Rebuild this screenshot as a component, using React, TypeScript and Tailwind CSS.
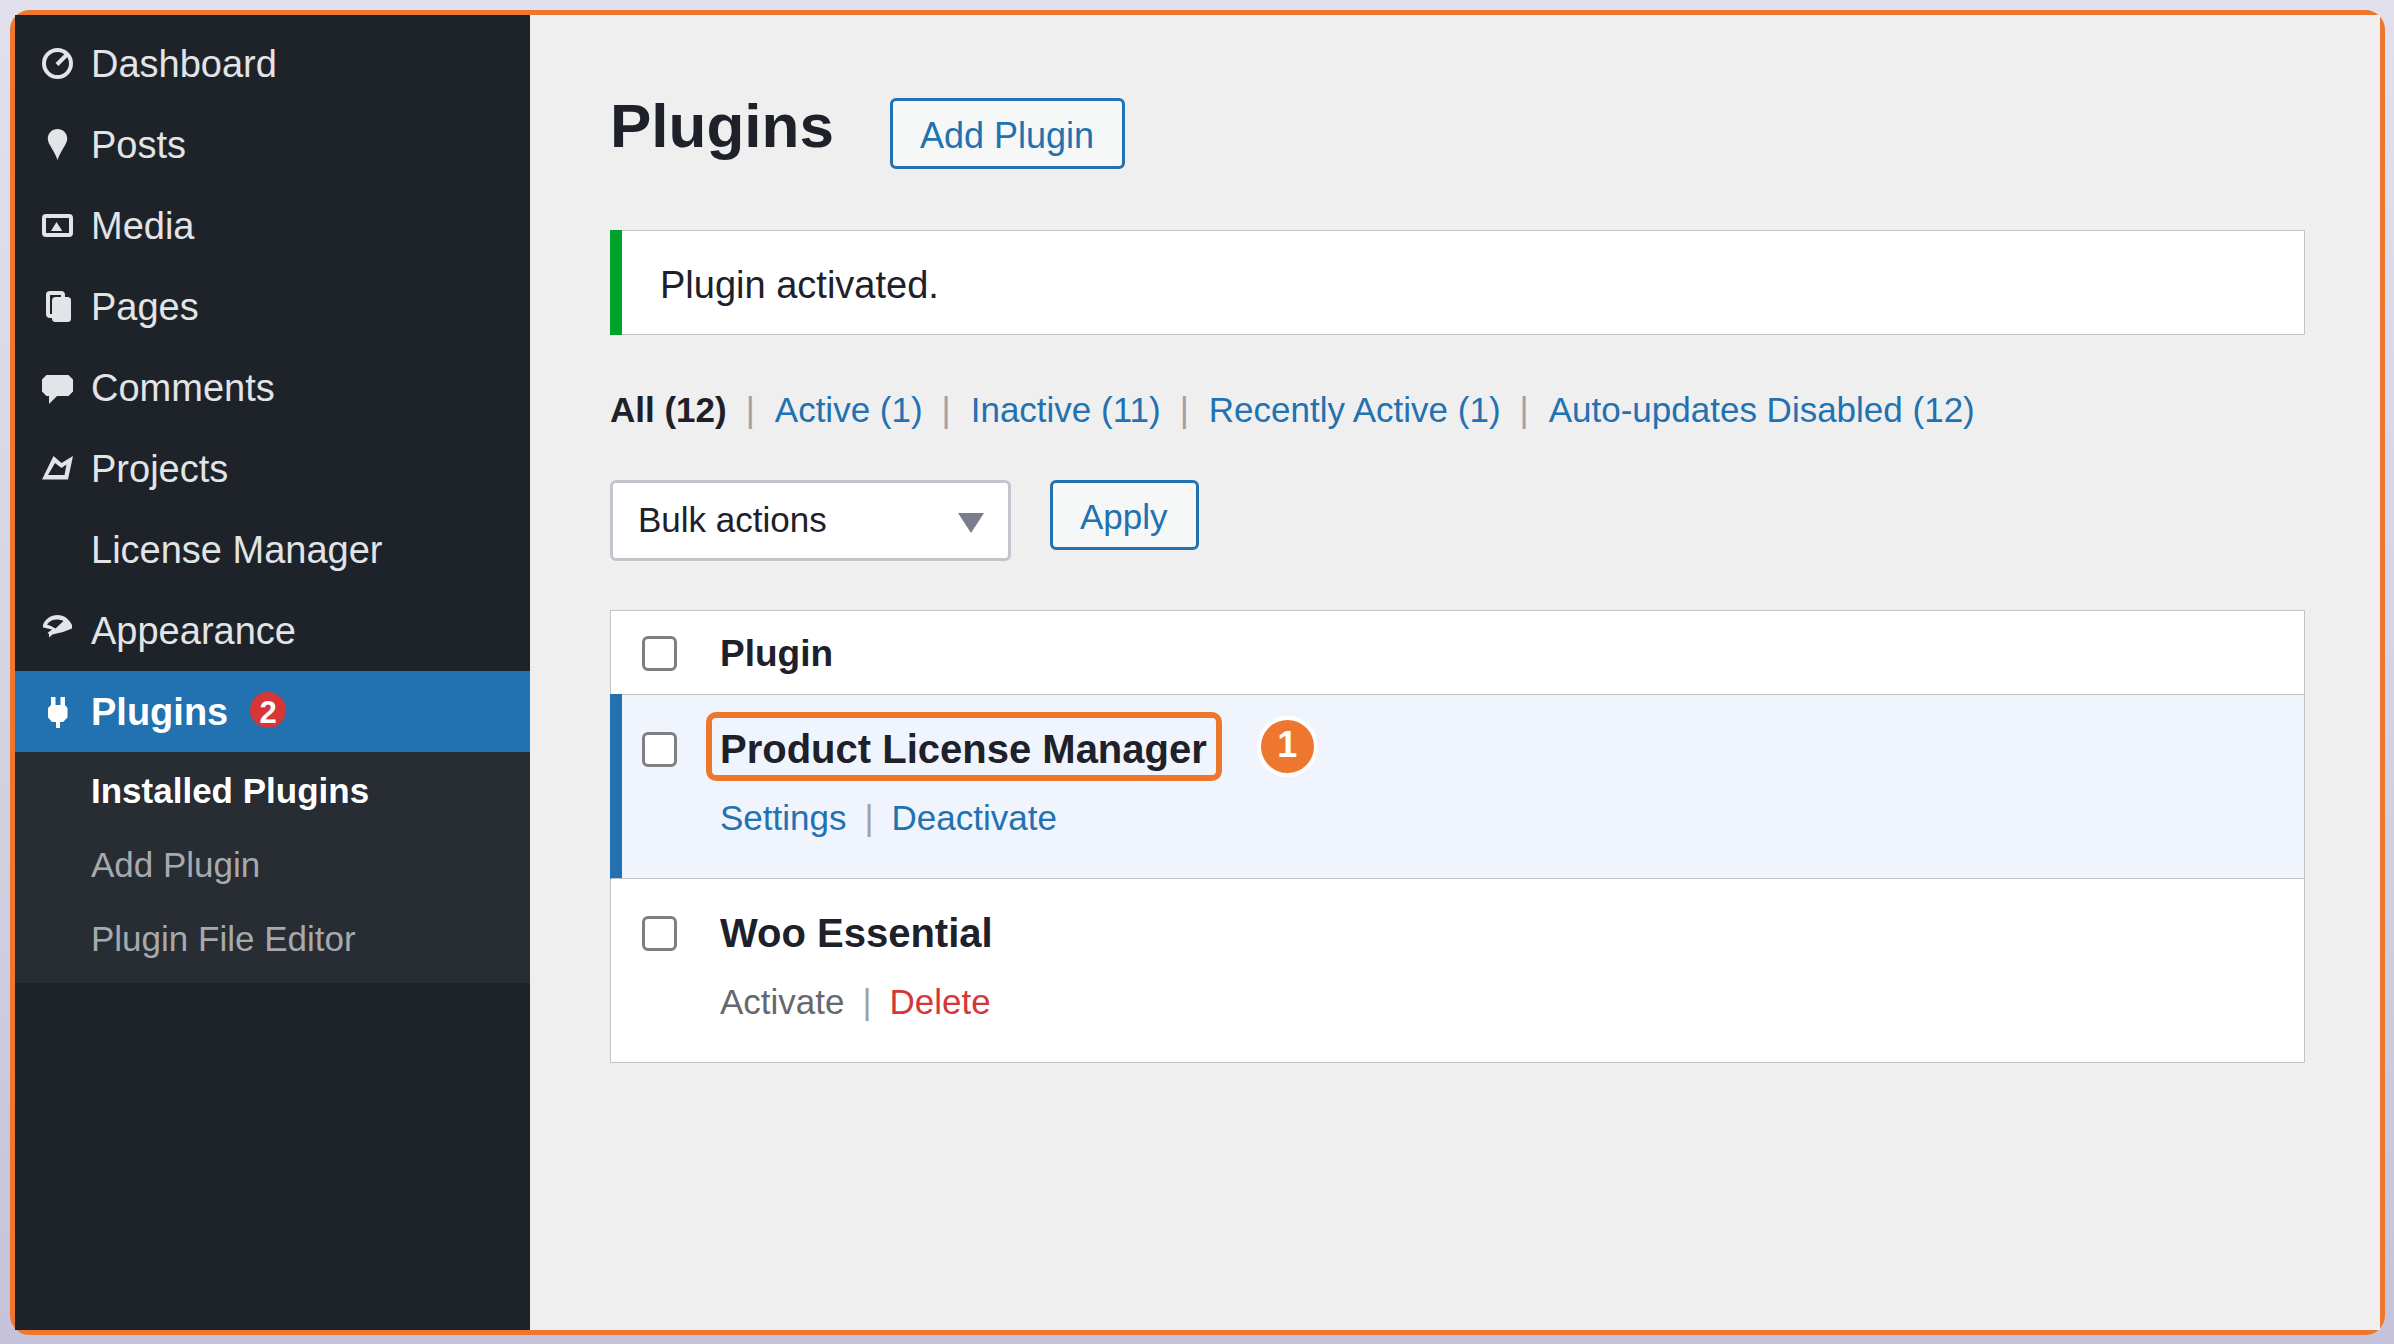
import { useState } from 'react'
import type { ReactNode } from 'react'

interface MenuItem {
  label: string
  icon?: ReactNode
}

interface PluginRow {
  name: string
  active: boolean
  step?: number
  actions: { label: string; tone: 'link' | 'muted' | 'danger' }[]
}

const iconProps = {
  viewBox: '0 0 31 31',
  className: 'size-[31px] shrink-0 overflow-visible',
  'aria-hidden': true,
}

const DashboardIcon = () => (
  <svg {...iconProps} fill="none" stroke="currentColor" strokeWidth="4">
    <circle cx="15.500" cy="15.500" r="13.500" />
    <path d="M15 16.500 L25 6.500" />
  </svg>
)

const PostsIcon = () => (
  <svg {...iconProps} fill="currentColor">
    <path d="M15.500 0c5.300 0 9.700 4.200 9.700 9.600 0 2.200-.7 4-1.800 6C20 21.500 17.200 26 15.500 31c-1.700-5-4.500-9.500-7.900-15.400-1.100-2-1.800-3.800-1.800-6C5.800 4.200 10.200 0 15.500 0z" />
  </svg>
)

const MediaIcon = () => (
  <svg {...iconProps} fill="currentColor">
    <rect x="2" y="6" width="27" height="19" rx="2" fill="none" stroke="currentColor" strokeWidth="4" />
    <path d="M14.500 12 L20.300 21 H9 Z" />
  </svg>
)

const PagesIcon = () => (
  <svg {...iconProps} fill="currentColor">
    <path
      d="M10 25H8a2 2 0 0 1-2-2V4a2 2 0 0 1 2-2h11a2 2 0 0 1 2 2v3"
      fill="none"
      stroke="currentColor"
      strokeWidth="4"
    />
    <rect x="10" y="6" width="19" height="25" rx="3.500" />
  </svg>
)

const CommentsIcon = () => (
  <svg {...iconProps} fill="currentColor">
    <path d="M4.500 3h22L31 7.500v12L26.500 24H15l-8 8v-8H4.500L0 19.500v-12z" />
  </svg>
)

const ProjectsIcon = () => (
  <svg {...iconProps} fill="currentColor">
    <path
      fillRule="evenodd"
      d="M0 26.500 L11.500 3 L19.500 10 L31 3 L26 26.500 Z M6 22 H22.500 L24.500 11.500 L19.500 15 L13 10 Z"
    />
  </svg>
)

const AppearanceIcon = () => (
  <svg {...iconProps} fill="currentColor">
    <path
      fillRule="evenodd"
      d="M1 10C3 4 9 0 15.500 0S27 4 30 10v3.500L21 17l-10.500 2.500-3.500 3V19l-1.500-1L10 14.500 3.500 13 1 12.500zM5 9.500l4 1.500 4.500 2.500L21.500 6C15.500 3 8 4.500 5 9.500z"
    />
  </svg>
)

const PluginsIcon = () => (
  <svg {...iconProps} fill="currentColor">
    <path d="M9 1h4.500v8h5V1H23v8l2.500 3v9.500L21 26h-3v6h-4v-6h-4L6 21.500V12l3-3z" />
  </svg>
)

const menu: MenuItem[] = [
  { label: 'Dashboard', icon: <DashboardIcon /> },
  { label: 'Posts', icon: <PostsIcon /> },
  { label: 'Media', icon: <MediaIcon /> },
  { label: 'Pages', icon: <PagesIcon /> },
  { label: 'Comments', icon: <CommentsIcon /> },
  { label: 'Projects', icon: <ProjectsIcon /> },
  { label: 'License Manager' },
  { label: 'Appearance', icon: <AppearanceIcon /> },
]

const submenu = ['Installed Plugins', 'Add Plugin', 'Plugin File Editor']

const filters = [
  'All (12)',
  'Active (1)',
  'Inactive (11)',
  'Recently Active (1)',
  'Auto-updates Disabled (12)',
]

const plugins: PluginRow[] = [
  {
    name: 'Product License Manager',
    active: true,
    step: 1,
    actions: [
      { label: 'Settings', tone: 'link' },
      { label: 'Deactivate', tone: 'link' },
    ],
  },
  {
    name: 'Woo Essential',
    active: false,
    actions: [
      { label: 'Activate', tone: 'muted' },
      { label: 'Delete', tone: 'danger' },
    ],
  },
]

const toneClass = {
  link: 'text-[#2271b1]',
  muted: 'text-[#66686d]',
  danger: 'text-[#d63638]',
}

const buttonClass =
  'rounded-md border-3 border-[#2271b1] bg-[#f6f7f7] pr-7 pb-[10px] pl-[27px] leading-10 text-[#2271b1]'

function Sidebar() {
  return (
    <nav className="w-[515px] shrink-0 bg-[#1e2329] pt-2 text-[38px] text-[#e2e4e7]">
      {menu.map((item) => (
        <a key={item.label} href="#" className="flex h-[81px] items-center pl-[27px]">
          <span className="w-[49px]">{item.icon}</span>
          <span className="pt-0.5">{item.label}</span>
        </a>
      ))}
      <a
        href="#"
        aria-current="page"
        className="flex h-[81px] items-center bg-[#2271b1] pl-[27px] font-bold text-white"
      >
        <span className="w-[49px]">
          <PluginsIcon />
        </span>
        <span className="pt-0.5">Plugins</span>
        <span className="mb-1 ml-[22px] flex size-9 items-center justify-center rounded-full bg-[#d63638] pt-2 text-[31px]">
          2
        </span>
      </a>
      <div className="bg-[#282c33] pt-0.5 pb-[7px] text-[35px]">
        {submenu.map((label, i) => (
          <a
            key={label}
            href="#"
            className={`flex h-[74px] items-center pl-[76px] ${
              i === 0 ? 'font-bold text-white' : 'text-[#a7aaad]'
            }`}
          >
            {label}
          </a>
        ))}
      </div>
    </nav>
  )
}

function Checkbox({ label, checked, onChange }: { label: string; checked: boolean; onChange: () => void }) {
  return (
    <input
      type="checkbox"
      aria-label={label}
      checked={checked}
      onChange={onChange}
      className="block size-[35px] appearance-none rounded-md border-3 border-[#7e8084] bg-white checked:bg-[#2271b1]"
    />
  )
}

export default function App() {
  const [selected, setSelected] = useState<string[]>([])
  const [action, setAction] = useState('bulk')

  const toggle = (name: string) =>
    setSelected((s) => (s.includes(name) ? s.filter((n) => n !== name) : [...s, name]))

  const allSelected = selected.length === plugins.length
  const toggleAll = () => setSelected(allSelected ? [] : plugins.map((p) => p.name))

  return (
    <div className="flex min-h-screen bg-linear-to-b from-[#e3e0ee] via-[#d5d4e2] to-[#c6c2da] pt-[10px] pr-[9px] pb-[9px] pl-[10px] font-['Liberation_Sans',sans-serif] text-[#1e202a]">
      <div className="flex flex-1 rounded-[20px] border-5 border-[#ee772f]">
        <Sidebar />

        <main className="min-w-0 flex-1 bg-[#efefef] pt-[83px] pr-[75px] pl-20">
          <header className="flex items-start gap-14">
            <h1 className="text-[62px] leading-[56px] font-bold">Plugins</h1>
            <button type="button" className={`${buttonClass} pt-[15px] text-[36px]`}>
              Add Plugin
            </button>
          </header>

          <div
            role="status"
            className="mt-[61px] flex border border-[#c3c4c7] bg-white text-[38px] leading-11"
          >
            <span className="-my-px -ml-px w-3 bg-[#00a32a]" />
            <p className="pt-8 pb-[27px] pl-[38px]">Plugin activated.</p>
          </div>

          <ul className="mt-[55px] flex text-[35px] leading-10">
            {filters.map((label, i) => (
              <li key={label}>
                {i > 0 && <span className="mr-5 ml-[19px] text-[#a0a1a8]">|</span>}
                <a href="#" className={i === 0 ? 'font-bold' : 'text-[#2271b1]'}>
                  {label}
                </a>
              </li>
            ))}
          </ul>

          <div className="mt-[50px] flex items-start gap-[39px] text-[35px]">
            <div className="relative">
              <select
                aria-label="Bulk actions"
                value={action}
                onChange={(e) => setAction(e.target.value)}
                className="h-[81px] w-[401px] appearance-none rounded-md border-3 border-[#c4c5cc] bg-white pr-16 pl-[25px]"
              >
                <option value="bulk">Bulk actions</option>
                <option value="activate">Activate</option>
                <option value="deactivate">Deactivate</option>
                <option value="delete">Delete</option>
              </select>
              <svg
                viewBox="0 0 26 20"
                className="pointer-events-none absolute top-[33px] right-[27px] h-5 w-[26px] fill-[#7c7d8c]"
                aria-hidden
              >
                <path d="M0 0 H26 L13 20 Z" />
              </svg>
            </div>
            <button type="button" className={`${buttonClass} pt-[14px]`}>
              Apply
            </button>
          </div>

          <table className="mt-[49px] w-full border-separate border-spacing-0 border border-[#c3c4c7] bg-white text-left text-[35px]">
            <thead>
              <tr>
                <th className="h-[83px] w-[109px] pt-0.5 pl-[31px]">
                  <Checkbox label="Select all plugins" checked={allSelected} onChange={toggleAll} />
                </th>
                <th className="pt-0.5 text-[37px] font-bold">Plugin</th>
              </tr>
            </thead>
            <tbody>
              {plugins.map((plugin) => (
                <tr key={plugin.name} className={plugin.active ? 'bg-[#eff4fd]' : ''}>
                  <td className="relative h-[184px] border-t border-[#c3c4c7] pt-[37px] pl-[31px] align-top">
                    {plugin.active && (
                      <span className="absolute -top-px -bottom-px -left-px w-3 bg-[#2271b1]" />
                    )}
                    <Checkbox
                      label={`Select ${plugin.name}`}
                      checked={selected.includes(plugin.name)}
                      onChange={() => toggle(plugin.name)}
                    />
                  </td>
                  <td className="border-t border-[#c3c4c7] pt-[17px] align-top">
                    <div className="flex items-center gap-[35px]">
                      <strong
                        className={`-ml-[14px] rounded-[10px] border-6 pt-[9px] pr-[9px] pb-1 pl-2 text-[40px] leading-11 ${
                          plugin.step ? 'border-[#ee772f]' : 'border-transparent'
                        }`}
                      >
                        {plugin.name}
                      </strong>
                      {plugin.step && (
                        <span className="-my-2 flex size-[61px] items-center justify-center rounded-full border-4 border-white bg-[#ee772f] pb-1 text-[36px] font-bold text-white">
                          {plugin.step}
                        </span>
                      )}
                    </div>
                    <div className="mt-[17px] leading-10">
                      {plugin.actions.map((a, i) => (
                        <span key={a.label}>
                          {i > 0 && <span className="mx-[18px] text-[#a0a1a8]">|</span>}
                          <a href="#" className={toneClass[a.tone]}>
                            {a.label}
                          </a>
                        </span>
                      ))}
                    </div>
                  </td>
                </tr>
              ))}
            </tbody>
          </table>
        </main>
      </div>
    </div>
  )
}
